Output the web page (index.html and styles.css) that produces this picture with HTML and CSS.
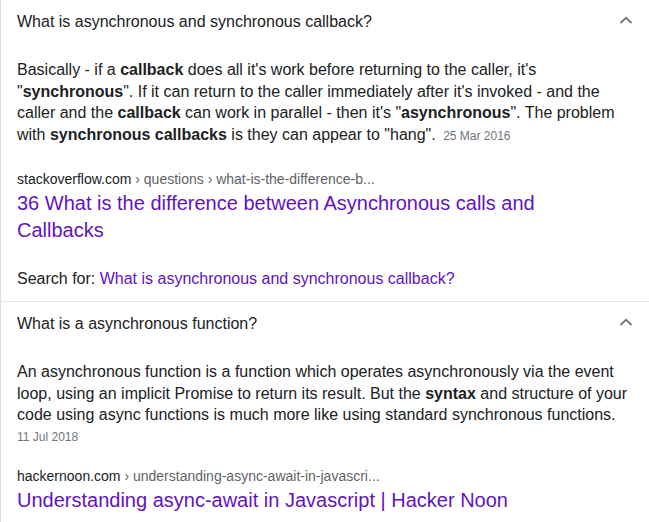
FILE: index.html
```html
<!DOCTYPE html>
<html>
<head>
<meta charset="utf-8">
<link rel="stylesheet" href="styles.css">
</head>
<body>
<div class="panel">
  <div class="qa">
    <div class="question">
      <span class="qtext">What is asynchronous and synchronous callback?</span>
      <svg class="chev" width="14" height="8" viewBox="0 0 14 8"><path d="M1.5 7 L7 1.8 L12.5 7" fill="none" stroke="#70757a" stroke-width="1.8"/></svg>
    </div>
    <div class="answer">
      <div class="snippet">Basically - if a <b>callback</b> does all it's work before returning to the caller, it's "<b>synchronous</b>". If it can return to the caller immediately after it's invoked - and the caller and the <b>callback</b> can work in parallel - then it's "<b>asynchronous</b>". The problem with <b>synchronous callbacks</b> is they can appear to "hang". <span class="date inline">25 Mar 2016</span></div>
      <div class="cite">stackoverflow.com<span class="path"> › questions › what-is-the-difference-b...</span></div>
      <a class="title" href="#">36 What is the difference between Asynchronous calls and Callbacks</a>
      <div class="searchfor">Search for: <a href="#">What is asynchronous and synchronous callback?</a></div>
    </div>
  </div>
  <div class="qa">
    <div class="question">
      <span class="qtext">What is a asynchronous function?</span>
      <svg class="chev" width="14" height="8" viewBox="0 0 14 8"><path d="M1.5 7 L7 1.8 L12.5 7" fill="none" stroke="#70757a" stroke-width="1.8"/></svg>
    </div>
    <div class="answer">
      <div class="snippet">An asynchronous function is a function which operates asynchronously via the event loop, using an implicit Promise to return its result. But the <b>syntax</b> and structure of your code using async functions is much more like using standard synchronous functions.</div>
      <div class="date block">11 Jul 2018</div>
      <div class="cite second">hackernoon.com<span class="path"> › understanding-async-await-in-javascri...</span></div>
      <a class="title" href="#">Understanding async-await in Javascript | Hacker Noon</a>
    </div>
  </div>
</div>
</body>
</html>
```
FILE: styles.css
```css
html, body {
  margin: 0;
  padding: 0;
  background: #fff;
}
body {
  font-family: "Liberation Sans", Arial, sans-serif;
  color: #202124;
}
.panel {
  border-left: 1px solid #dadce0;
  width: 648px;
  height: 522px;
  overflow: hidden;
}
.qa + .qa {
  border-top: 1px solid #e5e5e5;
}
.question {
  display: flex;
  align-items: center;
  justify-content: space-between;
  height: 44px;
  padding: 0 16px;
  font-size: 16px;
}
.chev {
  margin-top: -4px;
}
.answer {
  padding: 15px 16px 0 16px;
}
.snippet {
  font-size: 16px;
  line-height: 21.7px;
}
.snippet b {
  font-weight: bold;
}
.date {
  font-size: 12px;
  color: #70757a;
}
.date.inline {
  margin-left: 3px;
}
.date.block {
  line-height: 22px;
}
.cite {
  margin-top: 21px;
  font-size: 14px;
  line-height: 20px;
  color: #202124;
}
.cite.second {
  margin-top: 18px;
}
.cite .path {
  color: #5f6368;
}
.title {
  display: block;
  max-width: 600px;
  margin-top: 1px;
  font-size: 20px;
  line-height: 27px;
  color: #5f14c0;
  text-decoration: none;
}
.searchfor {
  margin-top: 24px;
  padding-bottom: 11px;
  font-size: 16px;
  line-height: 22px;
}
.searchfor a {
  color: #5f14c0;
  text-decoration: none;
}
```
